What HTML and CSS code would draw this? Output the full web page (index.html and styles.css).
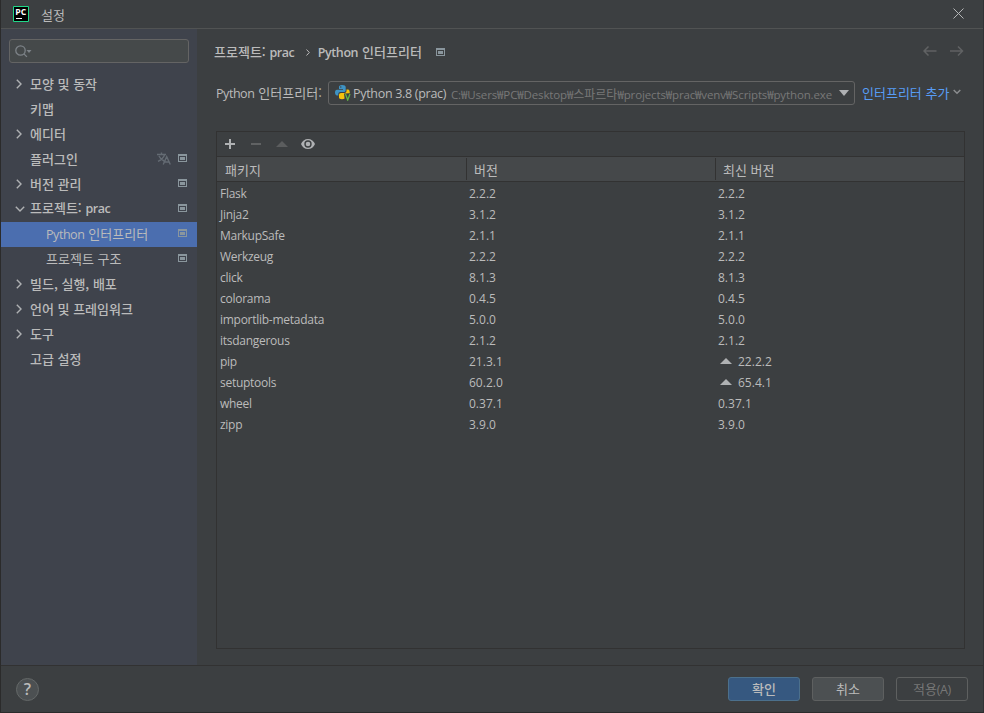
FILE: index.html
```html
<!DOCTYPE html>
<html lang="ko">
<head>
<meta charset="utf-8">
<title>설정</title>
<link rel="stylesheet" href="styles.css">
</head>
<body>
<svg class="defs" width="0" height="0">
  <symbol id="page" viewBox="0 0 9 8"><path d="M0 0h9v8H0zM1 2v5h7V2z" fill-rule="evenodd"/><path d="M2 3h5v3H2z"/></symbol>
  <symbol id="right" viewBox="0 0 6 10"><path d="M.8.8 5 5 .8 9.2" fill="none" stroke="currentColor" stroke-width="1.4"/></symbol>
  <symbol id="down" viewBox="0 0 10 6"><path d="M.8.8 5 5 9.2.8" fill="none" stroke="currentColor" stroke-width="1.4"/></symbol>
  <symbol id="up" viewBox="0 0 12 6"><path d="M0 6 6 0l6 6z"/></symbol>
</svg>
<div class="window">
  <header class="titlebar">
    <svg class="logo" width="16" height="16" viewBox="0 0 16 16"><path d="M.5.5h15v15H.5z" fill="#000" stroke="#21d789"/><path d="M3 12.500h6" stroke="#fff"/><text x="2.300" y="9" textLength="11" lengthAdjust="spacingAndGlyphs">PC</text></svg>
    <span class="title">설정</span>
    <svg class="close" width="11" height="11" viewBox="0 0 11 11"><path d="m.5.5 10 10m0-10-10 10" stroke="#b4b6b7" fill="none"/></svg>
  </header>
  <div class="main">
    <nav class="sidebar">
      <div class="search"><svg width="18" height="14" viewBox="0 0 18 14"><circle cx="5.500" cy="5.500" r="4.700"/><path d="m8.900 8.900 3 3"/><path class="fill" d="M11.500 5h5L14 8z"/></svg></div>
      <ul class="tree">
        <li><svg class="r"><use href="#right"/></svg><span>모양 및 동작</span></li>
        <li><span>키맵</span></li>
        <li><svg class="r"><use href="#right"/></svg><span>에디터</span></li>
        <li><span>플러그인</span><svg class="lang" viewBox="0 0 14 13"><path d="M0 2.5h9M4.5.5v2M7.5 3C6.5 6 4 8 1 9.3M2 4c1 2.3 2.8 4 5 5M6.2 12.5 9.7 4.7l3.6 7.8M7.5 10h4.6"/></svg><svg class="pg"><use href="#page"/></svg></li>
        <li><svg class="r"><use href="#right"/></svg><span>버전 관리</span><svg class="pg"><use href="#page"/></svg></li>
        <li><svg class="d"><use href="#down"/></svg><span>프로젝트: <b class="en">prac</b></span><svg class="pg"><use href="#page"/></svg></li>
        <li class="child selected"><span><i class="en">Python</i> 인터프리터</span><svg class="pg"><use href="#page"/></svg></li>
        <li class="child"><span>프로젝트 구조</span><svg class="pg"><use href="#page"/></svg></li>
        <li><svg class="r"><use href="#right"/></svg><span>빌드, 실행, 배포</span></li>
        <li><svg class="r"><use href="#right"/></svg><span>언어 및 프레임워크</span></li>
        <li><svg class="r"><use href="#right"/></svg><span>도구</span></li>
        <li><span>고급 설정</span></li>
      </ul>
    </nav>
    <main class="content">
      <div class="crumbs">
        <span class="strong">프로젝트: <b class="en">prac</b></span>
        <svg class="sep" viewBox="0 0 4 7"><path d="M.5.5 3.3 3.5.5 6.5"/></svg>
        <span class="strong"><b class="en">Python</b> 인터프리터</span>
        <svg class="pg"><use href="#page"/></svg>
        <svg class="arrows" viewBox="0 0 41 10"><path d="M1 5h12.500M5.500.5 1 5l4.500 4.500M27 5h12.500M35 .5 39.500 5 35 9.500"/></svg>
      </div>
      <div class="interpreter">
        <span class="label"><i class="en">Python</i> 인터프리터:</span>
        <div class="combo">
          <svg class="py" width="16" height="16" viewBox="0 0 16 16"><path d="M7 0C4.500 0 4 1 4 2v2h4v.7H2C.7 4.700 0 6 0 7.500S.7 10.500 2 10.500h1.300V9c0-1.300 1-2 2.200-2H9c1 0 1.700-.8 1.700-1.800V2C10.700.7 9.500 0 7 0z" fill="#3e93c4"/><path d="M11.500 4.500V6c0 1.200-.9 2-2 2H6C4.800 8 4 8.800 4 10v2.500C4 13.600 5.200 14.200 7 14.200c1 0 2-.2 2.600-.7L9 8.500l5.800-.2C14.800 6 14.300 4.500 13 4.500z" fill="#f4c20d"/><circle cx="5.800" cy="2" r=".7" fill="#3c3f41"/><path d="m10.500 9 2.200 6L15 9" fill="none" stroke="#62b543" stroke-width="1.300"/></svg>
          <span class="name">Python 3.8 (prac)</span>
          <span class="path">C:₩Users₩PC₩Desktop₩<span class="ko">스파르타</span>₩projects₩prac₩venv₩Scripts₩python.exe</span>
          <svg class="caret" viewBox="0 0 10 6"><path d="M0 0h10L5 6z"/></svg>
        </div>
        <a class="add">인터프리터 추가</a>
        <svg class="adddown" viewBox="0 0 8 6"><path d="m.7 1 3.300 3.300L7.300 1"/></svg>
      </div>
      <section class="packages">
        <div class="tools">
          <svg viewBox="0 0 10 10" width="10" height="10"><path d="M4 0h2v4h4v2H6v4H4V6H0V4h4z" fill="#afb1b3"/></svg>
          <svg viewBox="0 0 10 2" width="10" height="2"><path d="M0 0h10v2H0z" fill="#606263"/></svg>
          <svg class="dim" width="12" height="6"><use href="#up"/></svg>
          <svg class="eye" viewBox="0 0 14 10" width="14" height="10"><path d="M7 0C3.800 0 1.200 2 0 5c1.200 3 3.800 5 7 5s5.800-2 7-5C12.800 2 10.200 0 7 0z" fill="#afb1b3"/><circle cx="7" cy="5" r="3" fill="none" stroke="#3c3f41" stroke-width="1.400"/></svg>
        </div>
        <div class="row head"><span>패키지</span><span>버전</span><span>최신 버전</span></div>
        <div class="rows">
          <div class="row"><span>Flask</span><span>2.2.2</span><span>2.2.2</span></div>
          <div class="row"><span>Jinja2</span><span>3.1.2</span><span>3.1.2</span></div>
          <div class="row"><span>MarkupSafe</span><span>2.1.1</span><span>2.1.1</span></div>
          <div class="row"><span>Werkzeug</span><span>2.2.2</span><span>2.2.2</span></div>
          <div class="row"><span>click</span><span>8.1.3</span><span>8.1.3</span></div>
          <div class="row"><span>colorama</span><span>0.4.5</span><span>0.4.5</span></div>
          <div class="row"><span>importlib-metadata</span><span>5.0.0</span><span>5.0.0</span></div>
          <div class="row"><span>itsdangerous</span><span>2.1.2</span><span>2.1.2</span></div>
          <div class="row"><span>pip</span><span>21.3.1</span><span><svg class="upg" width="12" height="6"><use href="#up"/></svg>22.2.2</span></div>
          <div class="row"><span>setuptools</span><span>60.2.0</span><span><svg class="upg" width="12" height="6"><use href="#up"/></svg>65.4.1</span></div>
          <div class="row"><span>wheel</span><span>0.37.1</span><span>0.37.1</span></div>
          <div class="row"><span>zipp</span><span>3.9.0</span><span>3.9.0</span></div>
        </div>
      </section>
    </main>
  </div>
  <footer class="footer">
    <button class="help">?</button>
    <button class="btn ok">확인</button>
    <button class="btn">취소</button>
    <button class="btn off">적용<i class="en">(A)</i></button>
  </footer>
</div>
</body>
</html>
```
FILE: styles.css
```css
* { box-sizing: border-box; }
body { margin: 0; background: #3c3f41; color: #bbbbbb; font: 13px/20px "Noto Sans CJK KR", sans-serif; white-space: nowrap; }
svg { display: block; flex: none; fill: currentColor; }
.defs { position: absolute; }
.window { width: 984px; height: 713px; display: flex; flex-direction: column; border: 1px solid #2b2b2b; border-top: 0; border-right-color: #303234; overflow: hidden; }
.en { font-family: "Open Sans", sans-serif; font-size: 12.5px; font-style: normal; font-weight: 400; letter-spacing: -.45px; margin-right: .3px; }
b.en { font-weight: 600; letter-spacing: -.4px; }

.titlebar { height: 29px; flex: none; display: flex; align-items: center; padding: 0 19px 0 12px; border-bottom: 1px solid #515353; }
.logo text { font: bold 8.5px "Open Sans", sans-serif; fill: #fff; }
.title { margin-left: 12px; padding-top: 2px; }
.close { margin-left: auto; margin-top: -1px; }

.main { flex: 1; min-height: 0; display: flex; }
.sidebar { width: 196px; flex: none; background: #3f434c; padding-top: 10px; }
.search { margin: 0 8px; height: 24px; border: 1px solid #646464; border-radius: 3px; background: #45494a; padding: 5px; }
.search svg { fill: none; stroke: #7d8388; stroke-width: 1.3; }
.search .fill { fill: #7d8388; stroke: none; }
.tree { list-style: none; margin: 9px 0 0; padding: 0; }
.tree li { height: 25px; display: grid; grid-template-columns: 29px 1fr auto 9px; align-items: center; padding-right: 10px; font-weight: 500; }
.tree li > span { grid-column: 2; margin-top: -2px; }
.tree svg { grid-row: 1; }
.r { width: 6px; height: 10px; margin-left: 15px; margin-top: -2px; color: #afb1b3; }
.d { width: 10px; height: 6px; margin-left: 14px; margin-top: -2px; color: #afb1b3; }
.pg { width: 9px; height: 8px; color: #8a969d; }
.tree .pg { grid-column: 4; margin-top: -3px; }
.lang { grid-column: 3; width: 14px; height: 13px; margin-right: 7px; margin-top: -3px; fill: none; stroke: #646b73; stroke-width: 1.4; }
.tree li.child { grid-template-columns: 45px 1fr auto 9px; font-weight: 400; }
.tree li.selected > span { margin-top: 0; }
.tree .selected { background: #4b6eaf; }

.content { flex: 1; min-width: 0; display: flex; flex-direction: column; padding: 12px 18px 16px 19px; }
.crumbs { display: flex; align-items: center; height: 22px; padding-right: 1px; margin-left: -2px; }
.strong { font-weight: 500; }
.sep { width: 4px; height: 7px; margin: 0 8px 0 11px; fill: none; stroke: #bbb; }
.crumbs .pg { margin-left: 14px; }
.arrows { width: 41px; height: 10px; margin: -2px 0 0 auto; fill: none; stroke: #606263; stroke-width: 1.5; }
.interpreter { display: flex; align-items: center; height: 24px; margin-top: 18px; }
.label { width: 112px; }
.combo { width: 527px; height: 24px; border: 1px solid #646464; border-radius: 3px; display: flex; align-items: center; padding: 0 5px 0 6px; font-family: "Open Sans", "Noto Sans CJK KR", sans-serif; }
.name { font-size: 12.500px; width: 98px; margin-left: 2px; padding-top: 2px; letter-spacing: -.3px; }
.path { font-size: 11.500px; color: #787878; padding-top: 3px; letter-spacing: -.13px; }
.ko { font-size: 12px; letter-spacing: 0; }
.caret { width: 10px; height: 6px; margin-left: auto; color: #afb1b3; }
.add { color: #589df6; margin-left: 7px; }
.adddown { width: 8px; height: 6px; margin: -2px 0 0 4px; fill: none; stroke: #8b8d8f; stroke-width: 1.5; }

.packages { flex: 1; min-height: 0; margin-top: 26px; border: 1px solid #323232; }
.tools { height: 25px; display: flex; align-items: center; gap: 16px; padding-left: 8px; border-bottom: 1px solid #323232; }
.dim { color: #5b5d5e; margin-left: -1px; }
.eye { margin-left: -3px; }
.row { display: grid; grid-template-columns: 249px 249px 1fr; height: 21px; line-height: 21px; font-family: "Open Sans", sans-serif; font-size: 12px; }
.row span { padding-left: 3px; display: flex; align-items: center; }
.rows { padding-top: 1px; }
.rows span:first-child { letter-spacing: -.27px; }
.head { height: 25px; background: #45484a; border-bottom: 1px solid #323232; padding: 1px 0; font-family: "Noto Sans CJK KR", sans-serif; font-size: 13px; }
.head span { padding-left: 7px; border-left: 1px solid #323232; }
.head span:first-child { border-left: 0; padding-left: 8px; }
.upg { margin: -2px 6px 0 2px; color: #afb1b3; }

.footer { height: 47px; flex: none; border-top: 1px solid #323232; display: flex; align-items: center; gap: 12px; padding: 0 15px; }
.help { width: 23px; height: 23px; padding: 0; margin-right: auto; border: 1px solid #646868; border-radius: 50%; background: #4c5052; color: #bbb; font: 600 16px/20px "Open Sans", sans-serif; }
.btn { width: 72px; height: 24px; padding: 0; border: 1px solid #5e6060; border-radius: 3px; background: #4c5052; color: #bbb; font: 13px/22px "Noto Sans CJK KR", sans-serif; }
.ok { background: #365880; border-color: #4c708c; font-weight: 500; }
.off { background: transparent; color: #777; }
```
